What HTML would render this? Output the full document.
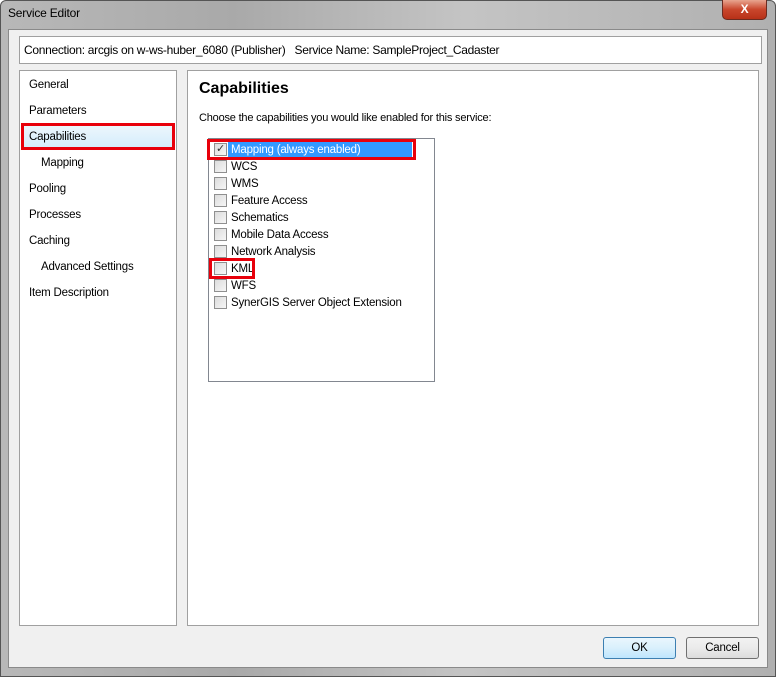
<!DOCTYPE html>
<html><head><style>
*{margin:0;padding:0;box-sizing:border-box}
body{width:776px;height:677px;overflow:hidden;font-family:"Liberation Sans",sans-serif;font-size:11.5px;letter-spacing:-0.2px;color:#000;background:#fff}
.frame{position:absolute;left:0;top:0;width:776px;height:677px;background:linear-gradient(90deg,#b8b8b8,#a9a9a9 30%,#c4c4c4 60%,#b0b0b0);border:1px solid #555;border-radius:6px 6px 0 0}
.title{position:absolute;left:8px;top:6px;font-size:12px;color:#000}
.close{position:absolute;left:722px;top:0;width:45px;height:20px;border:1px solid #6b2b20;border-top:none;border-radius:0 0 5px 5px;background:linear-gradient(#e8a58f,#c9462c 50%,#b73118);color:#fff;text-align:center;font-weight:bold;font-size:12px;line-height:18px}
.body{position:absolute;left:8px;top:29px;width:760px;height:639px;background:#f0f0f0;border:1px solid #8a8a8a}
.box{position:absolute;background:#fff;border:1px solid #a0a0a0}
.abs{position:absolute;white-space:nowrap}
.t{margin-top:2px}
.cb{position:absolute;width:13px;height:13px;border:1px solid #8f8f8f;background:linear-gradient(135deg,#dcdcdc,#f6f6f6)}
.btn{position:absolute;height:22px;border:1px solid #707070;border-radius:3px;background:linear-gradient(#f2f2f2,#ebebeb 50%,#dcdcdc);text-align:center;line-height:21px}
.red{position:absolute;border:3px solid #e8000b}
</style></head><body>
<div class="frame"></div>
<div class="title">Service Editor</div>
<div class="close">X</div>
<div class="body"></div>
<div class="box" style="left:19px;top:36px;width:743px;height:28px"></div>
<div class="abs" style="left:24px;top:43px;font-size:12px;letter-spacing:-0.3px">Connection: arcgis on w-ws-huber_6080 (Publisher)&nbsp;&nbsp; Service Name: SampleProject_Cadaster</div>
<div class="box" style="left:19px;top:70px;width:158px;height:556px"></div>
<div class="abs" style="left:22px;top:124px;width:152px;height:25px;background:linear-gradient(#eef7fd,#d3ecfb)"></div>
<div class="red" style="left:21px;top:123px;width:154px;height:27px"></div>
<div class="abs t" style="left:29px;top:77px">General</div>
<div class="abs t" style="left:29px;top:103px">Parameters</div>
<div class="abs t" style="left:29px;top:129px">Capabilities</div>
<div class="abs t" style="left:41px;top:155px">Mapping</div>
<div class="abs t" style="left:29px;top:181px">Pooling</div>
<div class="abs t" style="left:29px;top:207px">Processes</div>
<div class="abs t" style="left:29px;top:233px">Caching</div>
<div class="abs t" style="left:41px;top:259px">Advanced Settings</div>
<div class="abs t" style="left:29px;top:285px">Item Description</div>
<div class="box" style="left:187px;top:70px;width:572px;height:556px"></div>
<div class="abs" style="left:199px;top:80px;font-size:16px;font-weight:bold;letter-spacing:0">Capabilities</div>
<div class="abs t" style="left:199px;top:110px;font-size:11px">Choose the capabilities you would like enabled for this service:</div>
<div class="box" style="left:208px;top:138px;width:227px;height:244px;border-color:#828790"></div>
<div class="abs" style="left:228px;top:141px;width:184px;height:16px;background:#3399ff"></div>
<div class="cb" style="left:214px;top:143px;color:#333;font-size:11px;line-height:11px;text-align:center">✓</div>
<div class="abs t" style="left:231px;top:142px;color:#fff">Mapping (always enabled)</div>
<div class="cb" style="left:214px;top:160px"></div><div class="abs t" style="left:231px;top:159px">WCS</div>
<div class="cb" style="left:214px;top:177px"></div><div class="abs t" style="left:231px;top:176px">WMS</div>
<div class="cb" style="left:214px;top:194px"></div><div class="abs t" style="left:231px;top:193px">Feature Access</div>
<div class="cb" style="left:214px;top:211px"></div><div class="abs t" style="left:231px;top:210px">Schematics</div>
<div class="cb" style="left:214px;top:228px"></div><div class="abs t" style="left:231px;top:227px">Mobile Data Access</div>
<div class="cb" style="left:214px;top:245px"></div><div class="abs t" style="left:231px;top:244px">Network Analysis</div>
<div class="cb" style="left:214px;top:262px"></div><div class="abs t" style="left:231px;top:261px">KML</div>
<div class="cb" style="left:214px;top:279px"></div><div class="abs t" style="left:231px;top:278px">WFS</div>
<div class="cb" style="left:214px;top:296px"></div><div class="abs t" style="left:231px;top:295px">SynerGIS Server Object Extension</div>
<div class="red" style="left:207px;top:139px;width:209px;height:21px"></div>
<div class="red" style="left:209px;top:258px;width:46px;height:21px"></div>
<div class="btn" style="left:603px;top:637px;width:73px;border-color:#3c7fb1;background:linear-gradient(#eaf6fd,#d9f0fc 50%,#bee6fd)">OK</div>
<div class="btn" style="left:686px;top:637px;width:73px">Cancel</div>
</body></html>
